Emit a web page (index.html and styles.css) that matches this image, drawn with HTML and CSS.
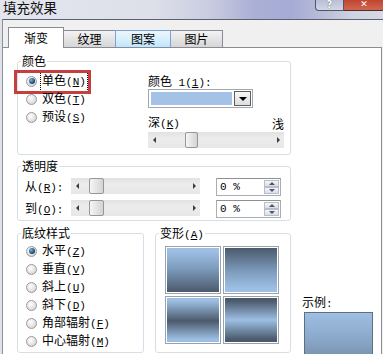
FILE: index.html
```html
<!DOCTYPE html>
<html>
<head>
<meta charset="utf-8">
<link rel="stylesheet" href="styles.css">
</head>
<body>
<div class="titlebar">
  <span class="title">填充效果</span>
  <div class="caption">
    <span class="btn-help">?</span>
    <span class="btn-close">✕</span>
  </div>
</div>
<div class="client">
  <div class="tabs">
    <div class="tab active">渐变</div>
    <div class="tab">纹理</div>
    <div class="tab hover">图案</div>
    <div class="tab">图片</div>
  </div>
  <div class="panel">
    <div class="left-col">
      <fieldset class="group g-color">
        <legend>颜色</legend>
        <div class="color-body">
          <div class="radios">
            <div class="radio checked"><span class="rb"></span><span class="focus">单色<span class="k">(<u>N</u>)</span></span><span class="hl"></span></div>
            <div class="radio"><span class="rb"></span><span>双色<span class="k">(<u>T</u>)</span></span></div>
            <div class="radio"><span class="rb"></span><span>预设<span class="k">(<u>S</u>)</span></span></div>
          </div>
          <div class="color-right">
            <div class="lbl">颜色<span class="k"> 1(<u>1</u>):</span></div>
            <div class="combo"><span class="combo-fill"></span><span class="combo-btn"></span></div>
            <div class="shade-row"><span>深<span class="k">(<u>K</u>)</span></span><span class="light">浅</span></div>
            <div class="hscroll w136"><span class="arr l"></span><span class="track"><span class="thumb t1"></span></span><span class="arr r"></span></div>
          </div>
        </div>
      </fieldset>

      <fieldset class="group g-trans">
        <legend>透明度</legend>
        <div class="trans-body">
          <div class="trow">
            <span class="tlabel">从<span class="k">(<u>R</u>):</span></span>
            <div class="hscroll w129"><span class="arr l"></span><span class="track"><span class="thumb t2"></span></span><span class="arr r"></span></div>
            <div class="edit"><span class="val k">0 %</span><span class="spin"><span class="up"></span><span class="dn"></span></span></div>
          </div>
          <div class="trow">
            <span class="tlabel">到<span class="k">(<u>O</u>):</span></span>
            <div class="hscroll w129"><span class="arr l"></span><span class="track"><span class="thumb t2"></span></span><span class="arr r"></span></div>
            <div class="edit"><span class="val k">0 %</span><span class="spin"><span class="up"></span><span class="dn"></span></span></div>
          </div>
        </div>
      </fieldset>

      <div class="bottom-groups">
        <fieldset class="group g-style">
          <legend>底纹样式</legend>
          <div class="style-body">
            <div class="radio checked"><span class="rb"></span><span>水平<span class="k">(<u>Z</u>)</span></span></div>
            <div class="radio"><span class="rb"></span><span>垂直<span class="k">(<u>V</u>)</span></span></div>
            <div class="radio"><span class="rb"></span><span>斜上<span class="k">(<u>U</u>)</span></span></div>
            <div class="radio"><span class="rb"></span><span>斜下<span class="k">(<u>D</u>)</span></span></div>
            <div class="radio"><span class="rb"></span><span>角部辐射<span class="k">(<u>F</u>)</span></span></div>
            <div class="radio"><span class="rb"></span><span>中心辐射<span class="k">(<u>M</u>)</span></span></div>
          </div>
        </fieldset>
        <fieldset class="group g-variant">
          <legend>变形<span class="k">(<u>A</u>)</span></legend>
          <div class="tiles">
            <div class="tile"><div class="grad v1"></div></div>
            <div class="tile"><div class="grad v2"></div></div>
            <div class="tile"><div class="grad v3"></div></div>
            <div class="tile"><div class="grad v4"></div></div>
          </div>
        </fieldset>
      </div>
    </div>
    <div class="right-col">
      <div class="sample-lbl">示例<span class="k">:</span></div>
      <div class="sample"></div>
    </div>
  </div>
</div>
</body>
</html>
```
FILE: styles.css
```css
* { box-sizing: border-box; }
html, body { margin: 0; padding: 0; }
body {
  width: 383px;
  height: 354px;
  overflow: hidden;
  background: #dfe2ea;
  font-family: "Noto Sans CJK SC", sans-serif;
  font-size: 12px;
  line-height: 14px;
  color: #000;
}
u { text-decoration: underline; text-underline-offset: 1px; }
.k { font-family: "Liberation Mono", monospace; font-size: 11px; }

/* title bar */
.titlebar {
  height: 19px;
  display: flex;
  justify-content: space-between;
  align-items: flex-start;
  overflow: hidden;
  background: linear-gradient(90deg, #e3e6ed 0%, #dde0e9 40%, #c9cce0 55%, #abb0d6 66%, #a5abd5 76%, #b9bdd8 84%, #cfd2e1 92%, #d6d9e5 100%);
}
.title {
  font-size: 13.5px;
  line-height: 14px;
  margin: 0 0 0 3px;
  color: #111;
}
.caption { display: flex; margin-right: -2px; }
.btn-help {
  width: 29px;
  height: 11px;
  border: 1px solid #4f5467;
  border-top: 0;
  border-radius: 0 0 0 4px;
  background: linear-gradient(#b9bed8, #d3d6e6);
  color: #fff;
  font-family: "DejaVu Sans", sans-serif;
  font-weight: bold;
  font-size: 10px;
  line-height: 10px;
  text-align: center;
  text-shadow: 0 0 1px #333;
  overflow: hidden;
}
.btn-close {
  width: 41px;
  height: 11px;
  border: 1px solid #4a2f2a;
  border-top: 0;
  border-left: 0;
  border-radius: 0 0 4px 0;
  background: linear-gradient(#bf4631, #d2664f);
  color: #fff;
  font-family: "DejaVu Sans", sans-serif;
  font-weight: bold;
  font-size: 9px;
  line-height: 9px;
  text-align: center;
  overflow: hidden;
}

/* client area */
.client {
  margin-left: 2px;
  height: 335px;
  border-left: 1px solid #8d919c;
  border-top: 1px solid #5c6172;
  background: #f0f0f0;
}
.tabs {
  display: flex;
  align-items: flex-end;
  height: 27px;
  padding-left: 5px;
}
.tab {
  height: 17px;
  border: 1px solid #898c95;
  border-bottom: 0;
  background: linear-gradient(#f3f3f3, #e4e4e4 50%, #d6d6d6);
  line-height: 15px;
  text-align: center;
  margin-left: -1px;
  width: 53px;
}
.tab:first-child { margin-left: 0; }
.tab.active {
  width: 56px;
  height: 21px;
  margin-bottom: -1px;
  background: #fff;
  line-height: 19px;
  position: relative;
  z-index: 1;
}
.tab.hover {
  width: 56px;
  background: linear-gradient(#eaf6fd, #d9f0fc 50%, #bee6fd);
  border-color: #7da2ce;
  position: relative;
}

.panel {
  display: flex;
  height: 307px;
  overflow: hidden;
  margin-right: 1px;
  border-top: 1px solid #898c95;
  border-right: 1px solid #898c95;
  background: #fff;
  padding: 6px 0 0 14px;
}
.left-col {
  width: 274px;
  flex: none;
  display: flex;
  flex-direction: column;
}
.right-col {
  flex: 1;
  padding: 241px 0 0 11px;
}
.sample-lbl { line-height: 14px; height: 17px; }
.sample {
  width: 69px;
  height: 60px;
  margin-left: 2px;
  border: 1px solid #5f6f82;
  background: linear-gradient(#9ebfe3, #88a5c6 50%, #6b7f99);
}

/* group box */
.group {
  margin: 0;
  padding: 0;
  min-width: 0;
  border: 1px solid #d5dfe5;
  border-radius: 3px;
}
.group legend {
  padding: 0 1px;
  margin-left: 3px;
  line-height: 14px;
  height: 14px;
}
.radio {
  display: flex;
  align-items: center;
  height: 18px;
  padding-left: 8px;
  position: relative;
  white-space: nowrap;
}
.rb {
  flex: none;
  width: 11px;
  height: 11px;
  margin-right: 5px;
  border-radius: 50%;
  border: 1px solid #9a9b9c;
  background: radial-gradient(circle at 40% 35%, #ffffff, #e3e3e3 55%, #c4c4c4);
  display: flex;
  align-items: center;
  justify-content: center;
}
.checked .rb::after {
  content: "";
  width: 6px;
  height: 6px;
  border-radius: 50%;
  background: radial-gradient(circle at 35% 35%, #7fb4dc, #1b4f7e 60%, #0c2a48);
}
.focus {
  outline: 1px dotted #000;
  outline-offset: 0;
  padding: 0 1px;
  margin-left: -1px;
  line-height: 17px;
}
.hl {
  position: absolute;
  left: -4px;
  top: -2px;
  width: 77px;
  height: 24px;
  border: 3px solid #c63e3e;
}

/* colour group */
.g-color { height: 101px; }
.color-body { display: flex; }
.radios { width: 130px; padding-top: 4px; }
.color-right { padding-top: 6px; }
.lbl { height: 14px; }
.combo {
  display: flex;
  width: 105px;
  height: 19px;
  margin-top: 1px;
  border: 1px solid #a0a8b2;
  background: #fff;
  padding: 1px;
}
.combo-fill { flex: 1; margin: 1px 2px 1px 1px; background: #a3c2e6; }
.combo-btn {
  width: 17px;
  border: 1px solid #5e5e5e;
  background: linear-gradient(#f7f7f7, #dedede);
  display: flex;
  align-items: center;
  justify-content: center;
}
.combo-btn::after {
  content: "";
  border-left: 4px solid transparent;
  border-right: 4px solid transparent;
  border-top: 4px solid #000;
}
.shade-row {
  display: flex;
  justify-content: space-between;
  width: 136px;
  height: 14px;
  margin-top: 7px;
}
.light { margin-top: 2px; }
.hscroll {
  display: flex;
  height: 16px;
  background: linear-gradient(#e2e2e2, #ececec 40%, #e7e7e7);
}
.w136 { width: 136px; margin-top: 3px; }
.w129 { width: 129px; flex: none; }
.arr {
  width: 12px;
  flex: none;
  display: flex;
  align-items: center;
  justify-content: center;
}
.arr::after { content: ""; border-top: 3px solid transparent; border-bottom: 3px solid transparent; }
.arr.l::after { border-right: 3px solid #3c3c3c; }
.arr.r::after { border-left: 3px solid #3c3c3c; }
.track { flex: 1; display: flex; }
.thumb {
  width: 13px;
  border: 1px solid #979797;
  border-radius: 2px;
  background: linear-gradient(90deg, #f5f5f5, #e4e4e4 50%, #d4d4d4);
}
.t1 { margin-left: 25px; }
.t2 { margin-left: 6px; width: 15px; }

/* transparency */
.g-trans { margin-top: 4px; height: 62px; }
.trans-body { padding: 5px 0 0 7px; }
.trow { display: flex; align-items: flex-start; height: 18px; margin-bottom: 4px; }
.tlabel { width: 46px; flex: none; line-height: 16px; }
.edit {
  display: flex;
  width: 65px;
  height: 18px;
  margin-left: 16px;
  border: 1px solid #abadb3;
  border-top-color: #8e9097;
  background: #fff;
  padding: 1px;
}
.val { flex: 1; padding-left: 2px; line-height: 14px; }
.spin { width: 15px; display: flex; flex-direction: column; }
.spin span {
  flex: 1;
  border: 1px solid #b8bec8;
  background: linear-gradient(#f4f6f9, #d9dee7);
  display: flex;
  align-items: center;
  justify-content: center;
}
.spin span::after { content: ""; border-left: 3px solid transparent; border-right: 3px solid transparent; }
.spin .up::after { border-bottom: 3px solid #4e5566; }
.spin .dn::after { border-top: 3px solid #4e5566; }

/* bottom groups */
.bottom-groups { display: flex; margin-top: 5px; }
.g-style { width: 127px; height: 127px; }
.style-body { padding-top: 2px; }
.g-variant { width: 136px; margin-left: 11px; height: 127px; }
.tiles {
  display: grid;
  grid-template-columns: 56px 56px;
  grid-template-rows: 48px 48px;
  gap: 2px;
  padding: 6px 0 0 9px;
}
.tile { border: 1px solid #9aa3ab; padding: 1px; background: #fff; }
.grad { width: 100%; height: 100%; }
.v1 { background: linear-gradient(#9dbfe3 8%, #7f9dbf 45%, #4b5a6c 100%); }
.v2 { background: linear-gradient(#4b5a6c 0%, #7f9dbf 55%, #9dbfe3 92%); }
.v3 { background: linear-gradient(#9dbfe3 6%, #4b5a6c 52%, #9dbfe3 94%); }
.v4 { background: linear-gradient(#4b5a6c 6%, #9dbfe3 50%, #4b5a6c 94%); }
```
